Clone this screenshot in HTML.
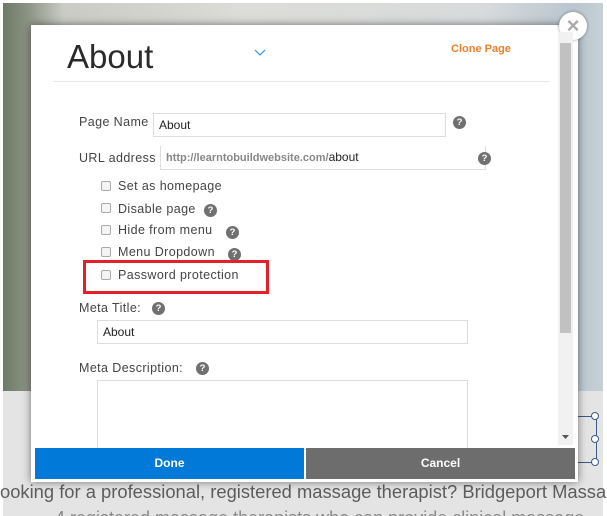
<!DOCTYPE html>
<html><head><style>
*{margin:0;padding:0;box-sizing:border-box}
html,body{width:607px;height:516px;overflow:hidden}
body{background:#fff;font-family:"Liberation Sans",sans-serif;position:relative}
.clip{position:absolute;left:0;top:0;width:607px;height:516px;overflow:hidden}
.bg{position:absolute;left:3px;top:3px;width:600px;height:388px;background:linear-gradient(90deg,#6f7a66 0%,#8a9282 4%,#c9cbc4 10%,#dcdcd8 40%,#d8dbdc 80%,#b9c6cf 95%,#c6d0d4 100%)}
.bg2{position:absolute;left:3px;top:391px;width:600px;height:125px;background:#e4e4e4}
.btxt{position:absolute;left:0;top:482px;font-size:18px;color:#5d5d5d;white-space:nowrap;transform:scaleX(1.02);transform-origin:left}
.btxt2{position:absolute;left:55px;top:508px;font-size:18px;color:#8a8a8a;white-space:nowrap}
.modal{position:absolute;left:31px;top:25px;width:547px;height:457px;background:#fff;box-shadow:0 0 8px rgba(0,0,0,.5)}
.close{position:absolute;left:559px;top:12px;width:28px;height:28px;border-radius:50%;background:#fff;box-shadow:0 0 3px rgba(0,0,0,.4);color:#aaa;font-weight:bold;font-size:22px;text-align:center;line-height:27px}
.title{position:absolute;left:67px;top:38px;font-size:33px;color:#2a2a2a;font-weight:300}
.chev{position:absolute;left:253px;top:47px}
.clone{position:absolute;left:451px;top:43px;font-size:11px;color:#f07f2c;font-weight:bold}
.hr{position:absolute;left:53px;top:81px;width:497px;height:1px;background:#e8e8e8}
.lbl{position:absolute;font-size:12.5px;color:#444;letter-spacing:.4px}
.inp{position:absolute;border:1px solid #ddd;background:#fff;font-size:12px;color:#222;padding-left:5px}
.q{position:absolute;width:13px;height:13px;border-radius:50%;background:#707070;color:#fff;font-size:9.5px;font-weight:bold;text-align:center;line-height:13px}
.cb{position:absolute;width:10px;height:10px;border:1px solid #aaa;border-radius:2px;background:#f4f4f4;left:101px}
.red{position:absolute;left:83px;top:260px;width:186px;height:34px;border:3px solid #e5202a}
.sb{position:absolute;left:558px;top:32px;width:15px;height:413px;background:#f1f1f1}
.th{position:absolute;left:560px;top:43px;width:11px;height:290px;background:#c1c1c1}
.done{position:absolute;left:35px;top:448px;width:269px;height:31px;background:#0079d8;color:#fff;font-weight:bold;font-size:12px;text-align:center;line-height:31px}
.cancel{position:absolute;left:306px;top:448px;width:269px;height:31px;background:#6d6d6d;color:#fff;font-weight:bold;font-size:12px;text-align:center;line-height:31px}
.hand{position:absolute;border:1px solid #3a5a8a;border-radius:50%;width:8px;height:8px;background:#fff}
</style></head><body><div class="clip">
<div class="bg"></div><div class="bg2"></div>
<div style="position:absolute;left:575px;top:416px;width:22px;height:47px;border:1px solid #3a5a8a;border-left:none"></div>
<div class="hand" style="left:591px;top:412px"></div>
<div class="hand" style="left:591px;top:435px"></div>
<div class="hand" style="left:591px;top:458px"></div>
<div class="btxt">ooking for a professional, registered massage therapist? Bridgeport Massa</div>
<div class="btxt2">4 registered massage therapists who can provide clinical massage</div>
<div class="modal"></div>
<div class="close">×</div>
<div class="title">About</div>
<svg class="chev" width="14" height="10"><path d="M2 3 L7 8 L12 3" fill="none" stroke="#4a9de0" stroke-width="1.3"/></svg>
<div class="clone">Clone Page</div>
<div class="hr"></div>
<div class="lbl" style="left:79px;top:115px">Page Name</div>
<div class="inp" style="left:153px;top:113px;width:293px;height:24px;line-height:22px">About</div>
<div class="q" style="left:453px;top:116px">?</div>
<div class="lbl" style="left:79px;top:151px">URL address</div>
<div class="inp" style="left:160px;top:146px;width:326px;height:24px;line-height:22px;border-top:none;border-right:1px solid #ddd"><span style="color:#888;font-weight:bold;font-size:11px">http://learntobuildwebsite.com/</span>about</div>
<div class="q" style="left:478px;top:152px">?</div>
<div class="cb" style="top:181px"></div><div class="lbl" style="left:118px;top:179px">Set as homepage</div>
<div class="cb" style="top:203px"></div><div class="lbl" style="left:118px;top:202px">Disable page</div><div class="q" style="left:204px;top:204px">?</div>
<div class="cb" style="top:225px"></div><div class="lbl" style="left:118px;top:223px">Hide from menu</div><div class="q" style="left:226px;top:226px">?</div>
<div class="cb" style="top:247px"></div><div class="lbl" style="left:118px;top:245px">Menu Dropdown</div><div class="q" style="left:228px;top:248px">?</div>
<div class="cb" style="top:270px"></div><div class="lbl" style="left:118px;top:268px">Password protection</div>
<div class="red"></div>
<div class="lbl" style="left:79px;top:301px">Meta Title:</div><div class="q" style="left:152px;top:302px">?</div>
<div class="inp" style="left:97px;top:320px;width:371px;height:24px;line-height:22px">About</div>
<div class="lbl" style="left:79px;top:361px">Meta Description:</div><div class="q" style="left:196px;top:362px">?</div>
<div class="inp" style="left:97px;top:380px;width:371px;height:70px"></div>
<div class="sb"></div><div class="th"></div>
<svg style="position:absolute;left:561px;top:434px" width="9" height="6"><path d="M1 1 L8 1 L4.5 5Z" fill="#555"/></svg>
<div class="done">Done</div>
<div class="cancel">Cancel</div>
</div></body></html>
